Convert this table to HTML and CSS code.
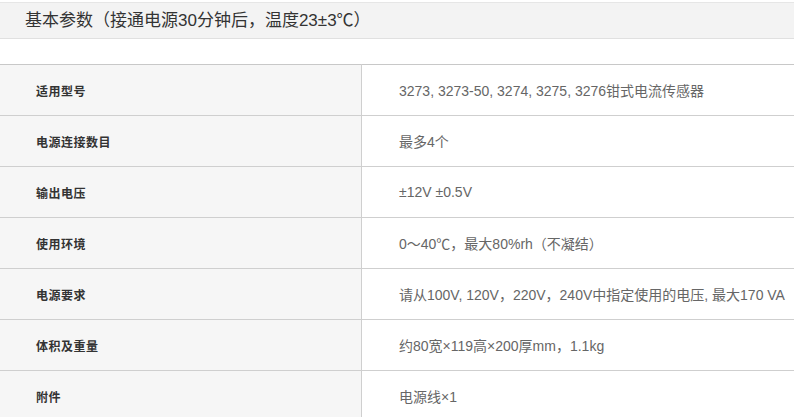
FILE: index.html
```html
<!DOCTYPE html>
<html lang="zh">
<head>
<meta charset="utf-8">
<link rel="stylesheet" href="styles.css">
</head>
<body>
<div class="page">
  <h2 class="title">基本参数（接通电源30分钟后，温度23±3℃）</h2>
  <table class="spec">
    <tr><th>适用型号</th><td>3273, 3273-50, 3274, 3275, 3276钳式电流传感器</td></tr>
    <tr><th>电源连接数目</th><td>最多4个</td></tr>
    <tr><th>输出电压</th><td>±12V ±0.5V</td></tr>
    <tr><th>使用环境</th><td>0～40℃，最大80%rh（不凝结）</td></tr>
    <tr><th>电源要求</th><td>请从100V, 120V，220V，240V中指定使用的电压, 最大170 VA</td></tr>
    <tr><th>体积及重量</th><td>约80宽×119高×200厚mm，1.1kg</td></tr>
    <tr><th>附件</th><td>电源线×1</td></tr>
  </table>
</div>
</body>
</html>
```
FILE: styles.css
```css
html, body {
  margin: 0;
  padding: 0;
  background: #fff;
}
.page {
  padding-top: 2px;
  font-family: "Liberation Sans", "Noto Sans CJK SC", sans-serif;
}
.title {
  margin: 0;
  height: 35px;
  line-height: 35px;
  padding-left: 25px;
  font-size: 17px;
  font-weight: normal;
  color: #333;
  background: #f3f3f3;
  border-top: 1px solid #e6e6e6;
  border-bottom: 1px solid #e0e0e0;
}
.spec {
  margin-top: 25px;
  width: 830px;
  border-collapse: collapse;
  border-top: 1px solid #c8c8c8;
}
.spec th, .spec td {
  height: 50px;
  padding: 0;
  border-bottom: 1px solid #cfcfcf;
  text-align: left;
  vertical-align: middle;
}
.spec th {
  width: 325px;
  padding-left: 36px;
  background: #f6f6f6;
  border-right: 1px solid #cfcfcf;
  font-family: "Noto Sans CJK SC", sans-serif;
  font-size: 12px;
  font-weight: bold;
  letter-spacing: 0.5px;
  color: #333;
}
.spec td {
  padding-left: 37px;
  font-size: 14px;
  color: #666;
}
```
